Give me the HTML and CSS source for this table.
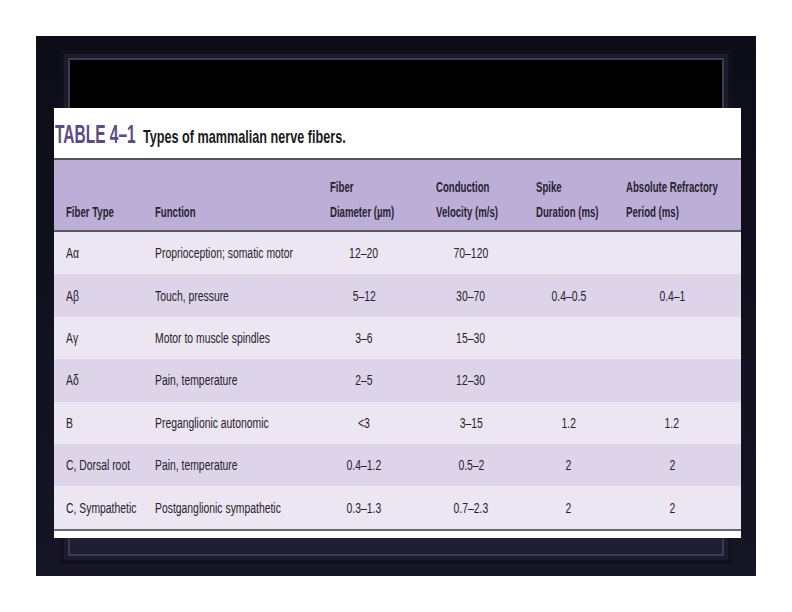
FILE: index.html
```html
<!DOCTYPE html>
<html>
<head>
<meta charset="utf-8">
<link rel="stylesheet" href="styles.css">
</head>
<body>
<div class="frame">
  <div class="bevel">
    <div class="inner"></div>
  </div>
  <div class="panel">
    <div class="caption"><span class="tag t">TABLE 4–1</span><span class="ctitle t">Types of mammalian nerve fibers.</span></div>
    <div class="thead row">
      <div class="c1"><span class="t">Fiber Type</span></div>
      <div class="c2"><span class="t">Function</span></div>
      <div class="c3"><span class="t">Fiber<br>Diameter (µm)</span></div>
      <div class="c4"><span class="t">Conduction<br>Velocity (m/s)</span></div>
      <div class="c5"><span class="t">Spike<br>Duration (ms)</span></div>
      <div class="c6"><span class="t">Absolute Refractory<br>Period (ms)</span></div>
    </div>
    <div class="row body odd"><div class="c1"><span class="t">Aα</span></div><div class="c2"><span class="t">Proprioception; somatic motor</span></div><div class="c3 n"><span class="t">12–20</span></div><div class="c4 n"><span class="t">70–120</span></div><div class="c5 n"></div><div class="c6 n"></div></div>
    <div class="row body even"><div class="c1"><span class="t">Aβ</span></div><div class="c2"><span class="t">Touch, pressure</span></div><div class="c3 n"><span class="t">5–12</span></div><div class="c4 n"><span class="t">30–70</span></div><div class="c5 n"><span class="t">0.4–0.5</span></div><div class="c6 n"><span class="t">0.4–1</span></div></div>
    <div class="row body odd"><div class="c1"><span class="t">Aγ</span></div><div class="c2"><span class="t">Motor to muscle spindles</span></div><div class="c3 n"><span class="t">3–6</span></div><div class="c4 n"><span class="t">15–30</span></div><div class="c5 n"></div><div class="c6 n"></div></div>
    <div class="row body even"><div class="c1"><span class="t">Aδ</span></div><div class="c2"><span class="t">Pain, temperature</span></div><div class="c3 n"><span class="t">2–5</span></div><div class="c4 n"><span class="t">12–30</span></div><div class="c5 n"></div><div class="c6 n"></div></div>
    <div class="row body odd"><div class="c1"><span class="t">B</span></div><div class="c2"><span class="t">Preganglionic autonomic</span></div><div class="c3 n"><span class="t">&lt;3</span></div><div class="c4 n"><span class="t">3–15</span></div><div class="c5 n"><span class="t">1.2</span></div><div class="c6 n"><span class="t">1.2</span></div></div>
    <div class="row body even"><div class="c1"><span class="t">C, Dorsal root</span></div><div class="c2"><span class="t">Pain, temperature</span></div><div class="c3 n"><span class="t">0.4–1.2</span></div><div class="c4 n"><span class="t">0.5–2</span></div><div class="c5 n"><span class="t">2</span></div><div class="c6 n"><span class="t">2</span></div></div>
    <div class="row body odd last"><div class="c1"><span class="t">C, Sympathetic</span></div><div class="c2"><span class="t">Postganglionic sympathetic</span></div><div class="c3 n"><span class="t">0.3–1.3</span></div><div class="c4 n"><span class="t">0.7–2.3</span></div><div class="c5 n"><span class="t">2</span></div><div class="c6 n"><span class="t">2</span></div></div>
  </div>
</div>
</body>
</html>
```
FILE: styles.css
```css
html, body {
  margin: 0;
  padding: 0;
  background: #ffffff;
}
body {
  width: 792px;
  height: 612px;
  overflow: hidden;
  font-family: "Liberation Sans", Arial, sans-serif;
}
.t {
  display: inline-block;
  transform-origin: 0 50%;
  white-space: nowrap;
}
.frame {
  position: relative;
  margin: 36px 0 0 36px;
  width: 720px;
  height: 540px;
  background: #07070d;
  box-shadow: inset 0 0 0 1px #23232f, inset 0 0 0 3px #0a0a12;
}
.bevel {
  padding: 12px 20px 12px 20px;
  box-sizing: border-box;
  height: 100%;
  background: linear-gradient(#0d0d18, #151525);
}
.inner {
  margin: 10px 12px 8px 12px;
  height: calc(100% - 18px);
  box-sizing: border-box;
  background: linear-gradient(#000 0, #000 calc(100% - 18px), #1d2034 calc(100% - 18px));
  border: 2px solid #3b3b58;
  box-shadow: 0 0 0 4px #1b1b2c, 0 0 0 8px #11111d;
}
.panel {
  position: absolute;
  left: 18px;
  top: 72px;
  width: 687px;
  height: 430px;
  background: #ffffff;
  color: #262329;
}
.caption {
  height: 52px;
  box-sizing: border-box;
  padding: 12px 0 0 1px;
  display: flex;
  align-items: baseline;
  border-bottom: 2px solid #55525a;
}
.tag {
  font-weight: bold;
  font-size: 25px;
  color: #5b4c88;
  transform: scaleX(0.62);
  width: 78px;
  margin-right: 10px;
}
.ctitle {
  font-weight: bold;
  font-size: 19px;
  color: #1c1a20;
  transform: scaleX(0.665);
}
.row {
  display: grid;
  grid-template-columns: 101px 175px 106px 100px 90px 115px;
  font-size: 15.5px;
}
.row > div {
  white-space: nowrap;
}
.row .c1 {
  padding-left: 12px;
}
.body .t {
  transform: scaleX(0.67);
}
.body .n .t {
  transform-origin: 50% 50%;
}
.thead {
  height: 72px;
  background: #bcaed7;
  align-items: end;
  padding-bottom: 6px;
  box-sizing: border-box;
  border-bottom: 2px solid #5a5660;
  font-weight: bold;
  line-height: 25px;
  color: #27232f;
}
.thead .t {
  transform: scaleX(0.62);
}
.body {
  height: 42.4px;
  align-items: center;
}
.odd { background: #ece6f2; }
.even { background: #ddd4ea; }
.n { text-align: center; }
.body .c3 { padding-right: 38px; }
.body .c4 { padding-right: 30px; }
.body .c5 { padding-right: 25px; }
.body .c6 { padding-right: 23px; }
.last {
  border-bottom: 2px solid #6a6870;
}
```
